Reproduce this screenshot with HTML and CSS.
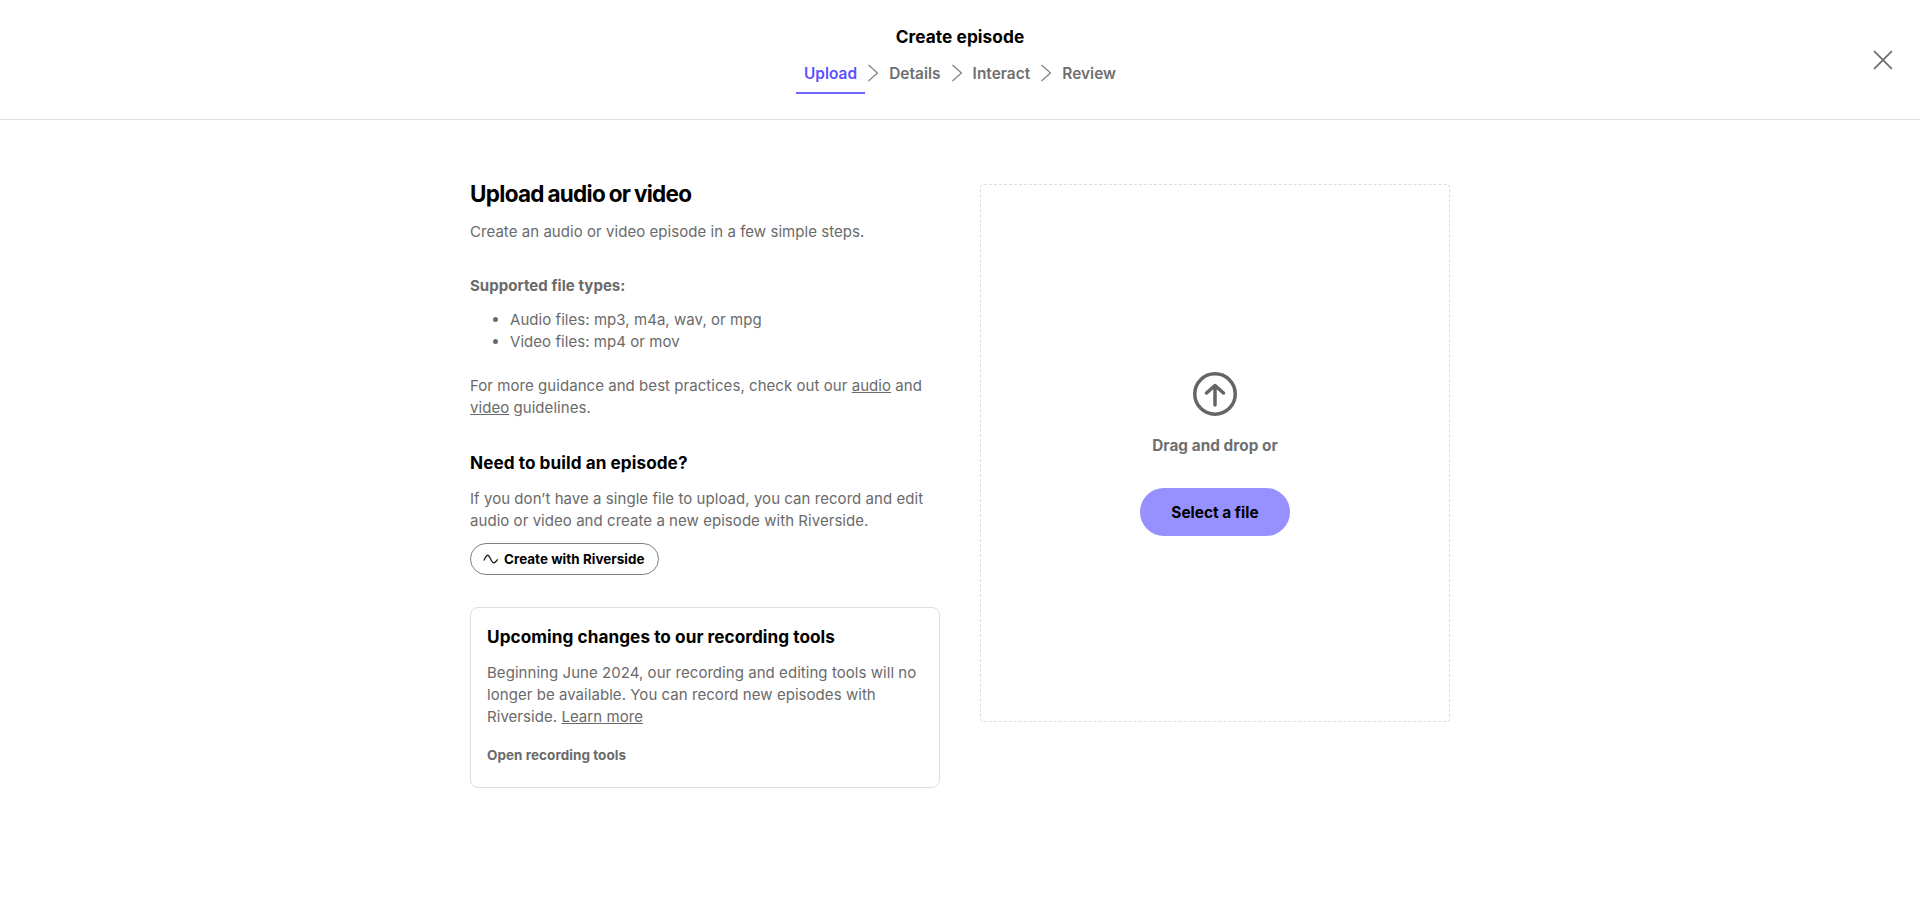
FILE: index.html
```html
<!DOCTYPE html>
<html lang="en">
<head>
<meta charset="utf-8">
<title>Create episode</title>
<link rel="stylesheet" href="styles.css">
</head>
<body>
<header class="topbar">
  <h1 class="topbar-title">Create episode</h1>
  <nav class="steps">
    <span class="step step-active">Upload</span>
    <svg class="chev" viewBox="0 0 12 20"><path d="M1.5 2l9 8-9 8" /></svg>
    <span class="step">Details</span>
    <svg class="chev" viewBox="0 0 12 20"><path d="M1.5 2l9 8-9 8" /></svg>
    <span class="step">Interact</span>
    <svg class="chev" viewBox="0 0 12 20"><path d="M1.5 2l9 8-9 8" /></svg>
    <span class="step">Review</span>
  </nav>
  <button class="close" aria-label="Close">
    <svg viewBox="0 0 18 18"><path d="M1 1l16 16M17 1L1 17" /></svg>
  </button>
</header>
<main class="content">
  <section class="info">
    <h2 class="heading">Upload audio or video</h2>
    <p class="text intro">Create an audio or video episode in a few simple steps.</p>
    <p class="text strong types">Supported file types:</p>
    <ul class="list">
      <li>Audio files: mp3, m4a, wav, or mpg</li>
      <li>Video files: mp4 or mov</li>
    </ul>
    <p class="text">For more guidance and best practices, check out our <a href="#">audio</a> and <a href="#">video</a> guidelines.</p>
    <h3 class="subheading build">Need to build an episode?</h3>
    <p class="text">If you don’t have a single file to upload, you can record and edit audio or video and create a new episode with Riverside.</p>
    <a class="pill" href="#">
      <svg viewBox="0 0 18 12"><path d="M1 7.5C2.500 4 3.500 2 5 2c2.500 0 3.500 8 6.500 8 1.500 0 2.500-1.200 4-3.500" /></svg>
      <span>Create with Riverside</span>
    </a>
    <div class="card">
      <h3 class="subheading">Upcoming changes to our recording tools</h3>
      <p class="text card-text">Beginning June 2024, our recording and editing tools will no longer be available. You can record new episodes with Riverside. <a href="#">Learn more</a></p>
      <a class="card-link" href="#">Open recording tools</a>
    </div>
  </section>
  <section class="drop">
    <svg class="upload-icon" viewBox="0 0 44 44"><circle cx="22" cy="22" r="20.250" /><path d="M22 33V13.500M13.500 21L22 13.500 30.500 21" /></svg>
    <p class="drop-text">Drag and drop or</p>
    <button class="select">Select a file</button>
  </section>
</main>
</body>
</html>
```
FILE: styles.css
```css
* { box-sizing: border-box; }
html, body { height: 100%; }
body {
  margin: 0;
  background: #fff;
  color: #6a6a6a;
  font-family: Inter, "Liberation Sans", sans-serif;
  font-size: 15px;
  line-height: 22px;
  letter-spacing: 0.05px;
}
.topbar {
  position: relative;
  height: 120px;
  border-bottom: 1px solid #dedede;
  display: flex;
  flex-direction: column;
  align-items: center;
  padding-top: 25px;
}
.topbar-title {
  margin: 0;
  font-size: 17.300px;
  line-height: 24px;
  font-weight: 700;
  color: #000;
}
.steps {
  display: flex;
  align-items: center;
  margin-top: 14px;
  height: 22px;
}
.step {
  font-size: 15.400px;
  font-weight: 600;
  color: #6f6f6f;
  padding: 0 8px;
  position: relative;
}
.step-active { color: #5b50ff; }
.step-active::after {
  content: "";
  position: absolute;
  left: 0;
  right: 0;
  bottom: -9px;
  height: 2px;
  background: #6e66ff;
}
.chev { width: 12px; height: 20px; margin: 0 2px; position: relative; top: -1px; }
.chev path { fill: none; stroke: #7f7f7f; stroke-width: 1.200; }
.close {
  position: absolute;
  top: 50px;
  right: 27px;
  width: 20px;
  height: 20px;
  padding: 0;
  border: 0;
  background: none;
}
.close svg { display: block; width: 20px; height: 20px; }
.close path { fill: none; stroke: #6f6f6f; stroke-width: 1.600; }
.content {
  display: flex;
  gap: 40px;
  width: 980px;
  margin: 64px auto 0;
}
.info { width: 470px; }
.heading {
  margin: -6px 0 0;
  font-size: 22.500px;
  line-height: 32px;
  font-weight: 700;
  letter-spacing: -0.700px;
  word-spacing: -1px;
  color: #000;
}
.text { margin: 0; }
.text a { color: inherit; }
.intro { margin-top: 11px; }
.strong { font-weight: 700; }
.types { margin-top: 32px; }
.list { margin: 12px 0 22px; padding-left: 40px; }
.subheading {
  margin: 0;
  font-size: 17.200px;
  line-height: 24px;
  font-weight: 700;
  color: #000;
}
.build { margin-top: 32px; margin-bottom: 13px; }
.pill {
  display: flex;
  width: fit-content;
  align-items: center;
  gap: 4px;
  height: 32px;
  margin-top: 11px;
  padding: 0 13px 0 12px;
  border: 1px solid #808080;
  border-radius: 16px;
  font-size: 13.400px;
  font-weight: 700;
  color: #000;
  text-decoration: none;
}
.pill svg { width: 17px; height: 12px; }
.pill path { fill: none; stroke: #222; stroke-width: 1.400; }
.card {
  margin-top: 32px;
  height: 181px;
  padding: 17px 16px;
  border: 1px solid #dedede;
  border-radius: 8px;
}
.card-text { margin-top: 13px; }
.card-link {
  display: block;
  margin-top: 16px;
  font-size: 13.500px;
  font-weight: 700;
  color: #6a6a6a;
  text-decoration: none;
}
.drop {
  width: 470px;
  height: 538px;
  border: 1px dashed #dedede;
  border-radius: 4px;
  display: flex;
  flex-direction: column;
  align-items: center;
  padding-top: 187px;
}
.upload-icon { width: 44px; height: 44px; }
.upload-icon circle, .upload-icon path { fill: none; stroke: #656565; stroke-width: 3.500; }
.upload-icon path { stroke-linecap: round; stroke-linejoin: round; }
.drop-text { margin: 19px 0 0; font-weight: 700; font-size: 15.300px; color: #6f6f6f; }
.select {
  width: 150px;
  height: 48px;
  margin-top: 31px;
  padding: 2px 0 0;
  border: 0;
  border-radius: 24px;
  background: #9691ff;
  color: #000;
  font: 700 15.400px/22px Inter, "Liberation Sans", sans-serif;
}
```
